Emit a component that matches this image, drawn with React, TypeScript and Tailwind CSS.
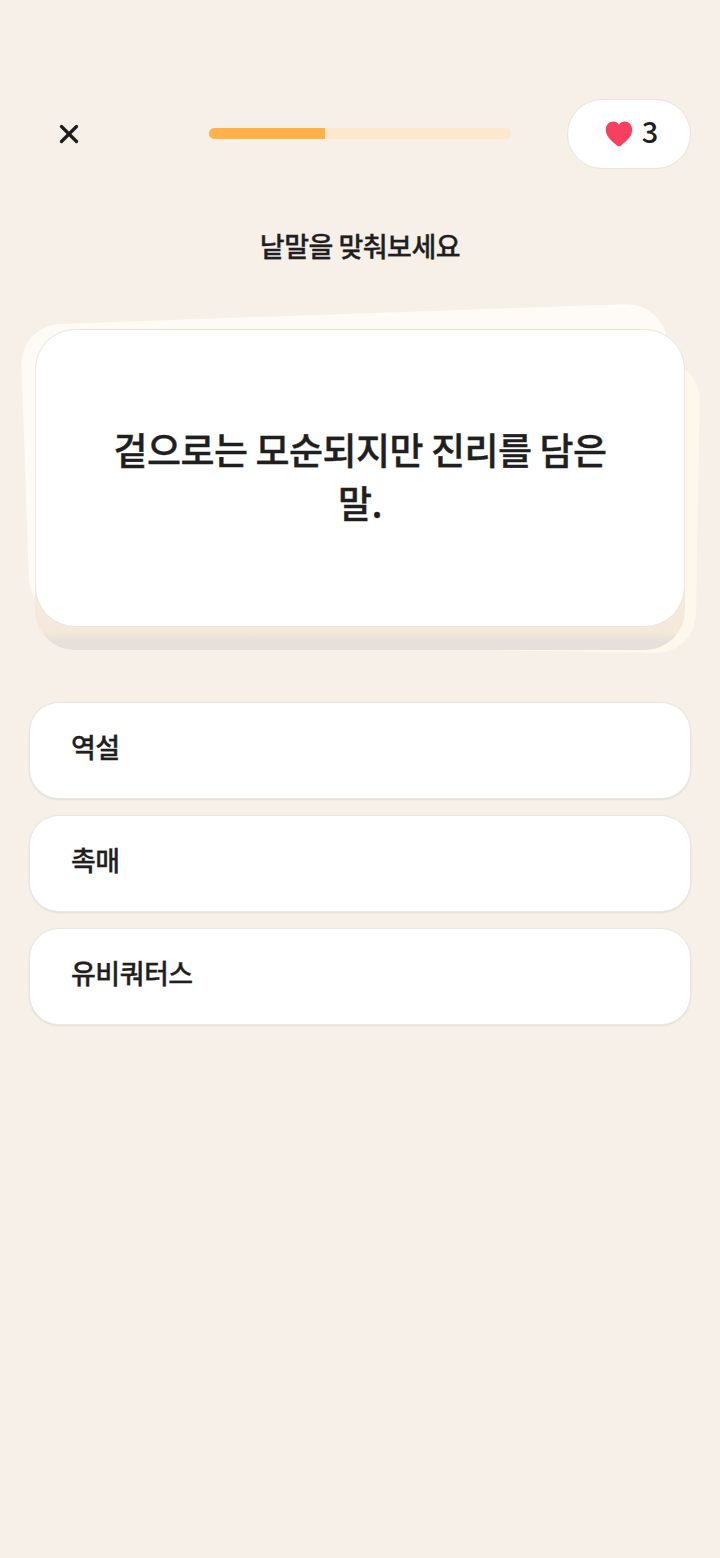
import { X } from 'lucide-react';

const options = ['역설', '촉매', '유비쿼터스'];

function Heart() {
  return (
    <svg width="28" height="26" viewBox="0 0 28 26" aria-hidden="true">
      <path
        d="M14 25.5C13.4 25.5 12.8 25.2 12.2 24.7C6 19.6 0.8 15.4 0.8 8.8C0.8 4 4.2 0.6 8.4 0.6C10.7 0.6 12.8 1.7 14 3.7C15.2 1.7 17.3 0.6 19.6 0.6C23.8 0.6 27.2 4 27.2 8.8C27.2 15.4 22 19.6 15.8 24.7C15.2 25.2 14.6 25.5 14 25.5Z"
        fill="#f6405f"
      />
    </svg>
  );
}

export default function App() {
  return (
    <div className="min-h-[1558px] bg-[#f6f0e9] text-[#1f1f1f] font-['Noto_Sans_CJK_KR','Noto_Sans',sans-serif]">
      <header className="flex items-center pt-[99px] pl-[46px] pr-[29px]">
        <button className="w-[46px] h-[69px] flex items-center justify-center text-[#1c1c1c]">
          <X size={30} strokeWidth={2.6} />
        </button>
        <div className="ml-[117px] w-[302px] h-[11px] -mt-[1px] rounded-full bg-[#fbe8cd] overflow-hidden">
          <div className="w-[116px] h-full bg-[#ffb24a]" />
        </div>
        <div className="ml-auto w-[124px] h-[70px] rounded-full bg-white border-[1.5px] border-[#ebe3d8] flex items-center justify-center gap-[9px] pl-[5px]">
          <Heart />
          <span className="text-[29px] leading-none font-medium -mt-[8px]">3</span>
        </div>
      </header>

      <h1 className="mt-[58px] text-center text-[27px] leading-[38px] font-medium tracking-[-0.5px] [-webkit-text-stroke:0.3px_#1f1f1f]">낱말을 맞춰보세요</h1>

      <div className="relative mt-[64px] mx-[35px] h-[298px]">
        <div className="absolute left-[-10px] right-[14px] top-[-15px] bottom-[20px] rounded-[40px] bg-[#fefbf6] rotate-[-2deg]" />
        <div className="absolute left-[6px] right-[-13px] top-[26px] bottom-[-21px] rounded-[40px] bg-[#fdf7ec] rotate-[1deg]" />
        <div className="absolute inset-x-0 top-[20px] bottom-[-23px] rounded-[40px] bg-gradient-to-b from-[#f4e9da] from-[94%] to-[#e7dfd9] to-[97%]" />
        <div className="relative h-full rounded-[40px] bg-white border-[1.5px] border-[#e9e5de] flex items-center justify-center px-[72px]">
          <p className="text-center text-[37px] leading-[53px] font-medium tracking-[-0.5px] -mt-[5px] [-webkit-text-stroke:0.4px_#1f1f1f]">겉으로는 모순되지만 진리를 담은 말.</p>
        </div>
      </div>

      <div className="mt-[75px] mx-[29px] flex flex-col gap-4">
        {options.map((option) => (
          <button
            key={option}
            className="h-[97px] rounded-[30px] bg-white border-[1.5px] border-[#eae6e1] shadow-[0_1px_2px_rgba(0,0,0,0.08)] text-left pl-[41px] pb-[6px] text-[27px] font-medium tracking-[-0.5px] [-webkit-text-stroke:0.3px_#1f1f1f]"
          >
            {option}
          </button>
        ))}
      </div>
    </div>
  );
}
